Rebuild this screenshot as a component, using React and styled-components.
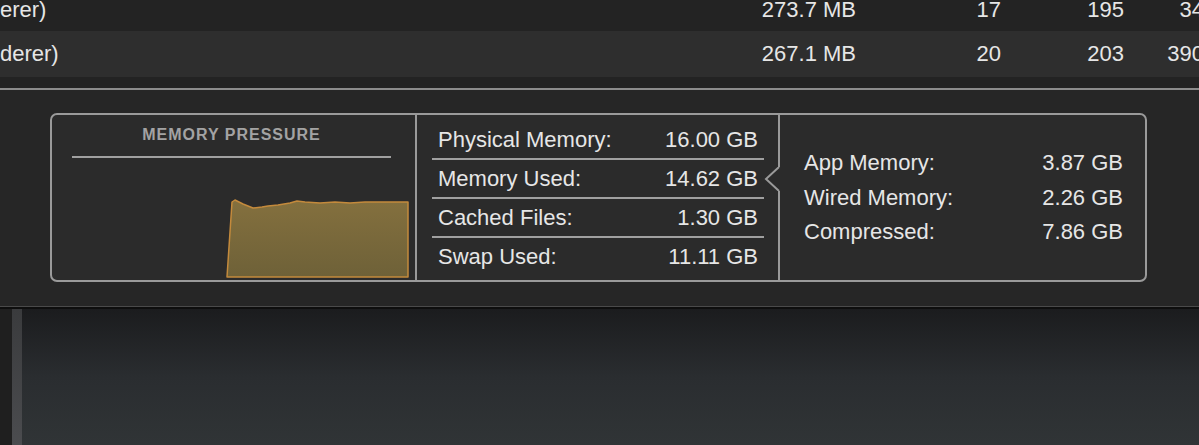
import React from 'react';
import styled, { createGlobalStyle } from 'styled-components';

const GlobalStyle = createGlobalStyle`
  html, body {
    margin: 0;
    padding: 0;
    background: #1c1d1f;
    overflow: hidden;
  }
  body {
    font-family: "Liberation Sans", "Inter", sans-serif;
    -webkit-font-smoothing: antialiased;
  }
`

const Page = styled.div`
  width: 1199px;
  height: 445px;
  display: flex;
  flex-direction: column;
  overflow: hidden;
`

const Table = styled.div`
  display: flex;
  flex-direction: column;
  margin-top: -12px;
`

const Row = styled.div`
  height: ${(p) => p.$h || 45}px;
  display: flex;
  align-items: center;
  background: ${(p) => (p.$alt ? '#2e2e2e' : '#232323')};
  color: #e6e6e6;
  font-size: 22px;
  white-space: nowrap;
`

const Cell = styled.div`
  width: ${(p) => p.$w}px;
  flex: none;
  text-align: ${(p) => (p.$right ? 'right' : 'left')};
`

const Filler = styled.div`
  height: 11px;
  background: #232323;
  border-bottom: 2px solid #8c8c8c;
`

const Footer = styled.div`
  height: 217px;
  background: #262626;
  padding: 23px 52px 0 50px;
  box-sizing: border-box;
  border-bottom: 1px solid #4a4a4a;
`

const Box = styled.div`
  height: 169px;
  box-sizing: border-box;
  border: 2px solid #9a9a9a;
  border-radius: 7px;
  background: #2b2b2b;
  display: flex;
`

const Pressure = styled.div`
  width: 365px;
  box-sizing: border-box;
  border-right: 2px solid #9a9a9a;
  padding: 10px 24px 0 20px;
  display: flex;
  flex-direction: column;
`

const Title = styled.div`
  font-size: 16px;
  font-weight: 700;
  color: #a3a3a3;
  letter-spacing: 1px;
  text-align: center;
  line-height: 20px;
  padding-bottom: 11px;
  border-bottom: 2px solid #a0a0a0;
`

const Chart = styled.svg`
  display: block;
  margin-top: 40px;
  margin-left: -2px;
`

const Stats = styled.div`
  width: 347px;
  box-sizing: border-box;
  padding: 0 0 0 15px;
  display: flex;
  flex-direction: column;
  justify-content: center;
`

const StatRow = styled.div`
  height: 36px;
  display: flex;
  align-items: center;
  justify-content: space-between;
  padding: 1px 6px 0 6px;
  color: #e6e6e6;
  font-size: 22px;
  & + & {
    border-top: 2px solid #a0a0a0;
  }
`

const Notch = styled.div`
  width: 16px;
  display: flex;
  flex-direction: column;
  align-items: flex-end;
  & > span {
    display: block;
    width: 2px;
    background: #9a9a9a;
  }
  & > span:first-child {
    height: 52px;
  }
  & > span:last-child {
    flex: 1;
  }
`

const Breakdown = styled.div`
  flex: 1;
  display: flex;
  flex-direction: column;
  justify-content: center;
  padding: 0 22px 0 24px;
`

const BreakRow = styled.div`
  height: 34.5px;
  display: flex;
  align-items: center;
  justify-content: space-between;
  color: #e6e6e6;
  font-size: 22px;
`

const Desktop = styled.div`
  flex: 1;
  display: flex;
  border-top: 2px solid #0e0e0e;
  background: linear-gradient(#1b1c1e, #2a2d30 50%, #303436);
`

const Edge = styled.div`
  width: 12px;
  background: #1f1f1f;
`

const Rail = styled.div`
  width: 10px;
  background: linear-gradient(#3a3b3d, #4b4c4f);
`

const processes = [
  { name: 'erer)', mem: '273.7 MB', threads: '17', ports: '195', pid: '34', h: 43 },
  { name: 'derer)', mem: '267.1 MB', threads: '20', ports: '203', pid: '390', h: 46, alt: true },
]

const stats = [
  ['Physical Memory:', '16.00 GB'],
  ['Memory Used:', '14.62 GB'],
  ['Cached Files:', '1.30 GB'],
  ['Swap Used:', '11.11 GB'],
]

const breakdown = [
  ['App Memory:', '3.87 GB'],
  ['Wired Memory:', '2.26 GB'],
  ['Compressed:', '7.86 GB'],
]

// pressure graph, coords relative to the chart box
const graph = 'M157 79 L162 4 L165 2 L173 6 L183 10 L192 9 L198 8 L208 7 L220 5 L227 3 L235 4 L250 5 L265 4 L280 5 L295 4 L310 4 L318 4 L338 4 L338 79 Z'

const App = () => (
  <Page>
    <GlobalStyle />
    <Table>
      {processes.map((p) => (
        <Row key={p.pid} $alt={p.alt} $h={p.h}>
          <Cell $w={736}>{p.name}</Cell>
          <Cell $w={120} $right>{p.mem}</Cell>
          <Cell $w={145} $right>{p.threads}</Cell>
          <Cell $w={123} $right>{p.ports}</Cell>
          <Cell $w={80} $right>{p.pid}</Cell>
        </Row>
      ))}
    </Table>
    <Filler />
    <Footer>
      <Box>
        <Pressure>
          <Title>MEMORY PRESSURE</Title>
          <Chart width="340" height="82" viewBox="0 0 340 82">
            <defs>
              <linearGradient id="fill" x1="0" y1="0" x2="0" y2="1">
                <stop offset="0" stopColor="#84703e" />
                <stop offset="1" stopColor="#6e6138" />
              </linearGradient>
            </defs>
            <path d={graph} fill="url(#fill)" stroke="#c48a3c" strokeWidth="1.5" strokeLinejoin="round" />
          </Chart>
        </Pressure>
        <Stats>
          {stats.map(([k, v]) => (
            <StatRow key={k}>
              <span>{k}</span>
              <span>{v}</span>
            </StatRow>
          ))}
        </Stats>
        <Notch>
          <span />
          <svg width="16" height="24" viewBox="0 0 16 24">
            <polyline points="15,0 2,12 15,24" fill="none" stroke="#9a9a9a" strokeWidth="2" />
          </svg>
          <span />
        </Notch>
        <Breakdown>
          {breakdown.map(([k, v]) => (
            <BreakRow key={k}>
              <span>{k}</span>
              <span>{v}</span>
            </BreakRow>
          ))}
        </Breakdown>
      </Box>
    </Footer>
    <Desktop>
      <Edge />
      <Rail />
    </Desktop>
  </Page>
)

export default App;
